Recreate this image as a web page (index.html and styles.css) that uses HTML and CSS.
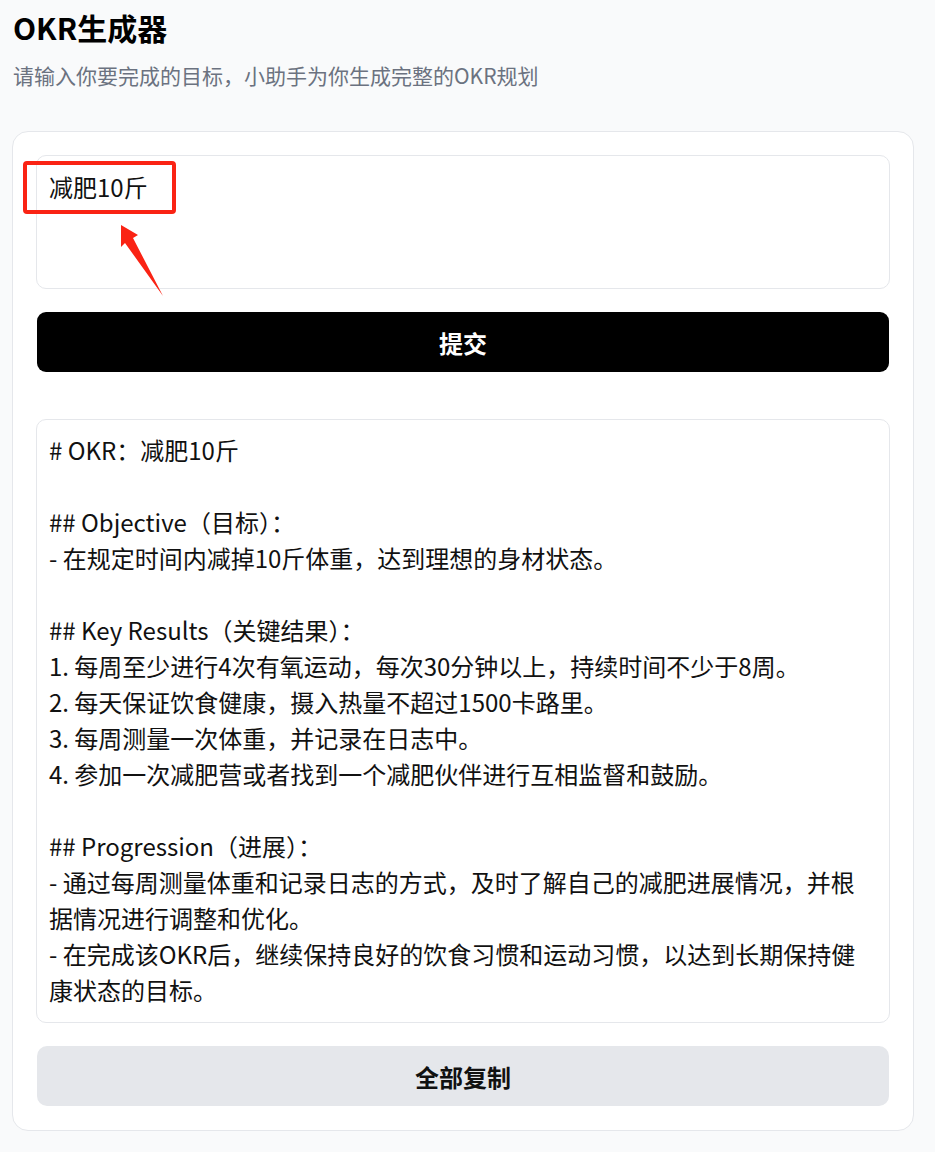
FILE: index.html
```html
<!DOCTYPE html>
<html lang="zh-CN">
<head>
    <meta charset="UTF-8">
    <meta name="viewport" content="width=device-width, initial-scale=1.0">
    <title>OKR生成器</title>
    <link rel="stylesheet" href="styles.css">
</head>
<body>
    <div class="page">
        <h1>OKR生成器</h1>
        <p class="subtitle">请输入你要完成的目标，小助手为你生成完整的OKR规划</p>

        <div class="card">
            <div class="input-wrap">
                <div class="goal-input">减肥10斤</div>
                <div class="mark-box"></div>
                <svg class="mark-arrow" width="60" height="80" viewBox="0 0 60 80">
                    <polygon points="1,0 18,10 13,13 43,71 5,18 1,22" fill="#fa2314"/>
                </svg>
            </div>

            <button class="btn-submit">提交</button>

            <div class="result">
                <div class="line"># OKR：减肥10斤</div>
                <div class="line">&nbsp;</div>
                <div class="line">## Objective（目标）：</div>
                <div class="line">- 在规定时间内减掉10斤体重，达到理想的身材状态。</div>
                <div class="line">&nbsp;</div>
                <div class="line">## Key Results（关键结果）：</div>
                <div class="line">1. 每周至少进行4次有氧运动，每次30分钟以上，持续时间不少于8周。</div>
                <div class="line">2. 每天保证饮食健康，摄入热量不超过1500卡路里。</div>
                <div class="line">3. 每周测量一次体重，并记录在日志中。</div>
                <div class="line">4. 参加一次减肥营或者找到一个减肥伙伴进行互相监督和鼓励。</div>
                <div class="line">&nbsp;</div>
                <div class="line">## Progression（进展）：</div>
                <div class="line">- 通过每周测量体重和记录日志的方式，及时了解自己的减肥进展情况，并根据情况进行调整和优化。</div>
                <div class="line">- 在完成该OKR后，继续保持良好的饮食习惯和运动习惯，以达到长期保持健康状态的目标。</div>
            </div>

            <button class="btn-copy">全部复制</button>
        </div>
    </div>
</body>
</html>
```

FILE: styles.css
```css
body {
    margin: 0;
    background: #f9fafb;
    font-family: "Noto Sans CJK SC", "Noto Sans", sans-serif;
    color: #111;
}
.page {
    padding: 9px 21px 22px 12px;
}
h1 {
    margin: 0 0 0 1px;
    font-size: 30px;
    line-height: 36px;
    font-weight: 700;
    color: #000;
}
.subtitle {
    margin: 14px 0 0 1px;
    font-size: 21px;
    line-height: 32px;
    color: #6b7280;
}
.card {
    margin-top: 40px;
    background: #fff;
    border: 1px solid #e5e7eb;
    border-radius: 16px;
    padding: 23px 23px 24px 23px;
    display: flex;
    flex-direction: column;
}
.input-wrap {
    position: relative;
}
.goal-input {
    height: 134px;
    box-sizing: border-box;
    border: 1px solid #e5e7eb;
    border-radius: 10px;
    padding: 13px 12px;
    font-size: 24px;
    line-height: 36px;
    color: #111;
}
.mark-box {
    position: absolute;
    left: -13px;
    top: 6px;
    width: 153px;
    height: 53px;
    box-sizing: border-box;
    border: 4px solid #fa2314;
    border-radius: 4px;
}
.mark-arrow {
    position: absolute;
    left: 84px;
    top: 70px;
}
button {
    font-family: inherit;
    border: none;
    cursor: pointer;
    font-size: 24px;
    font-weight: 700;
    height: 60px;
    margin: 0 1px;
}
.btn-submit {
    margin-top: 23px;
    background: #000;
    color: #fff;
    border-radius: 9px;
}
.result {
    margin-top: 47px;
    border: 1px solid #e5e7eb;
    border-radius: 10px;
    padding: 12px 24px 14px 12px;
    font-size: 24px;
    line-height: 36px;
    color: #111;
}
.btn-copy {
    margin-top: 23px;
    background: #e5e7eb;
    color: #111;
    border-radius: 10px;
}
```
